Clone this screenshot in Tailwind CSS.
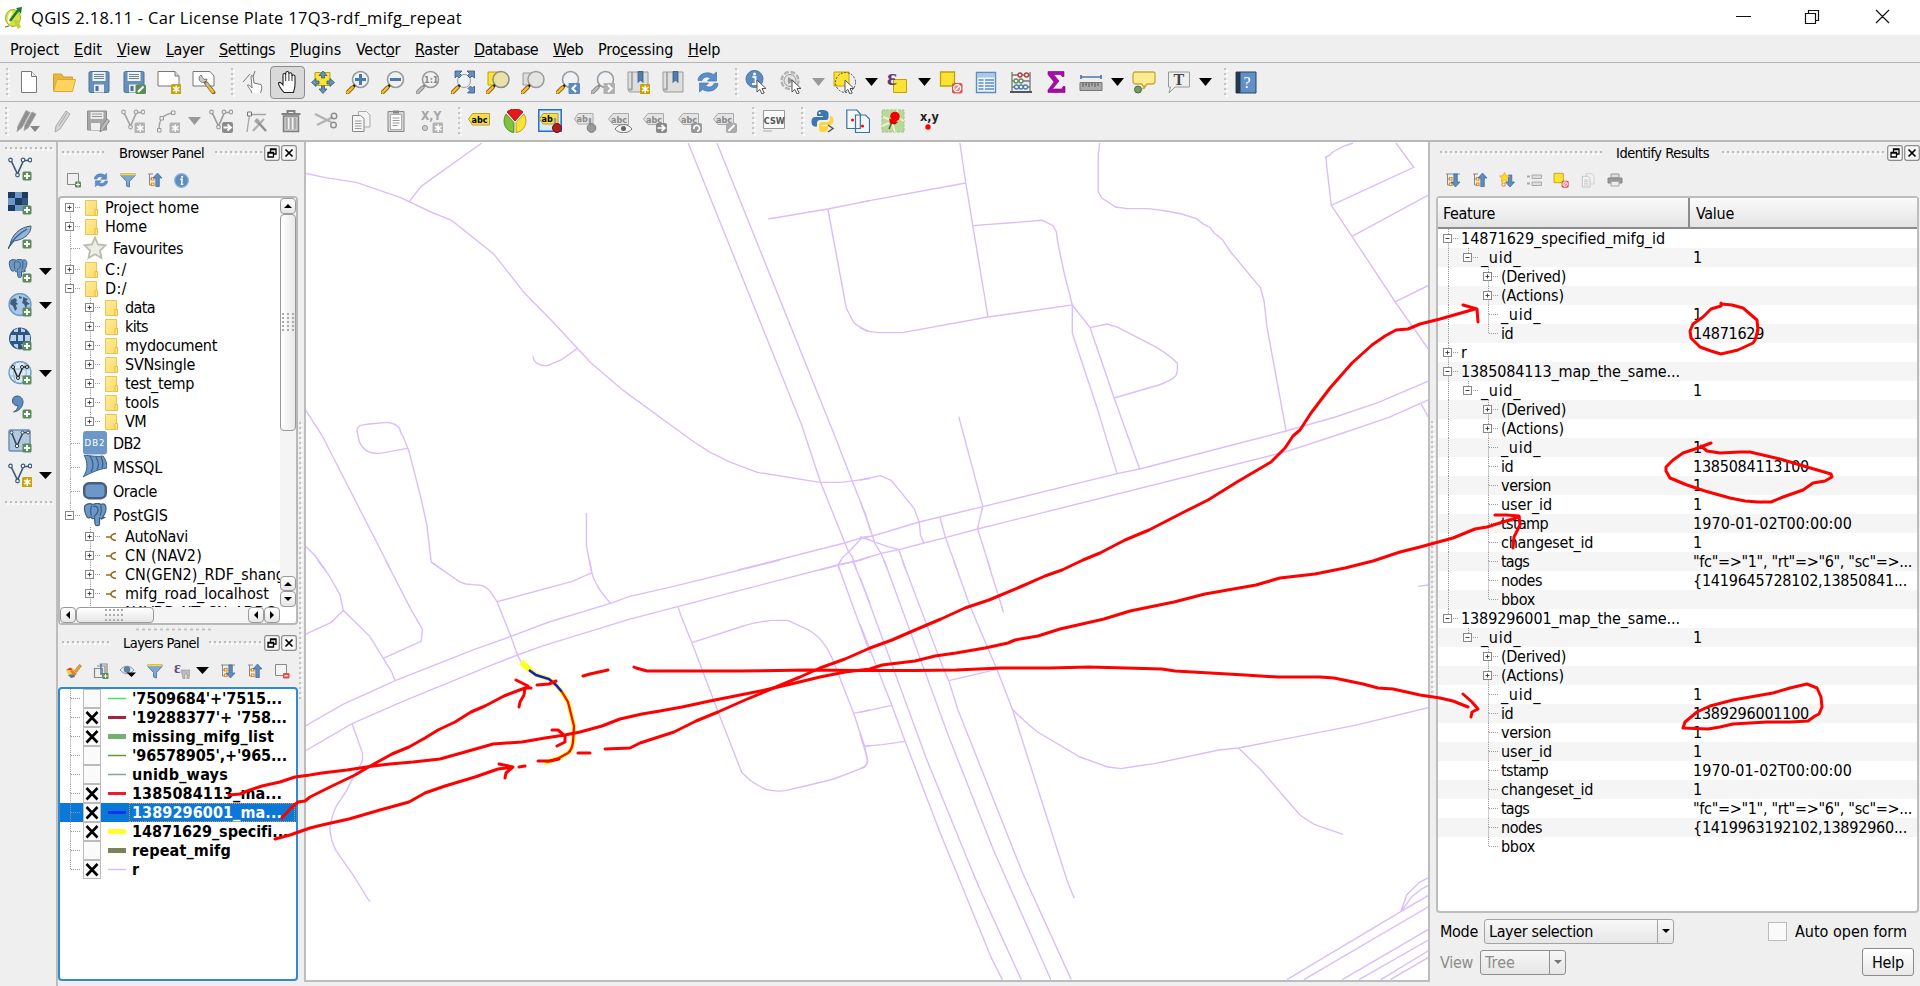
<!DOCTYPE html>
<html lang="en">
<head>
<meta charset="utf-8">
<title>QGIS 2.18.11 - Car License Plate 17Q3-rdf_mifg_repeat</title>
<script src="https://cdn.jsdelivr.net/npm/@tailwindcss/browser@4"></script>
</head>
<body class="w-[1920px] h-[986px] overflow-hidden bg-[#efefef] text-black text-[16px] leading-[19px] font-['DejaVu_Sans_Condensed','DejaVu_Sans','Noto_Sans',sans-serif] [font-stretch:condensed]">

<svg class="absolute h-0 w-0" width="0" height="0" xmlns="http://www.w3.org/2000/svg">
  <defs>
    <linearGradient id="gy" x1="0" y1="0" x2="1" y2="1"><stop offset="0" stop-color="#ffeb98"/><stop offset="1" stop-color="#fddb6a"/></linearGradient>
    <pattern id="gv" width="4" height="5" patternUnits="userSpaceOnUse"><path d="M0 1h2v2h-2z" fill="#c4c4c4"/><path d="M2 3h2v2h-2z" fill="#fff"/></pattern>
    <g id="lens"><circle cx="14.500" cy="9.500" r="8" fill="#eef2f5" stroke="#9a9a9a" stroke-width="1.600"/></g>
    <g id="handle"><path d="M9 15l-3 3" stroke="#222" stroke-width="2.500"/><path d="M6.500 17.500L1.500 22.500" stroke="#6b4a00" stroke-width="4" stroke-linecap="round"/><path d="M6.500 17.500L1.500 22.500" stroke="#f6b82c" stroke-width="2.600" stroke-linecap="round"/></g>
    <g id="handleg"><path d="M9 15l-3 3" stroke="#888" stroke-width="2.500"/><path d="M6.500 17.500L1.500 22.500" stroke="#8c8c8c" stroke-width="4" stroke-linecap="round"/><path d="M6.500 17.500L1.500 22.500" stroke="#bbb" stroke-width="2.400" stroke-linecap="round"/></g>
    <g id="plus"><rect x="14.500" y="14.500" width="9" height="9" rx="1.500" fill="#5a8c5a"/><path d="M19 16v6M16 19h6" stroke="#fff" stroke-width="2"/></g>
    <g id="starb"><rect x="14" y="14" width="10.500" height="10.500" rx="1.500" fill="#c8a206"/><path d="M19.200 15.500v7.600M16 17.200l6.500 4M16 21.200l6.500-4" stroke="#fff" stroke-width="1.500"/></g>
    <g id="starg"><rect x="13.500" y="13.500" width="11" height="11" rx="1.500" fill="#b3b3b3"/><path d="M19.200 15.500v7.600M16 17.200l6.500 4M16 21.200l6.500-4" stroke="#fff" stroke-width="1.500"/></g>
    <g id="vee" fill="none"><path d="M3 3.500L9.500 17 15.500 3.500H22" stroke-width="1.700"/><g fill="#efefef" stroke-width="1.200"><circle cx="2.500" cy="3" r="1.800"/><circle cx="15" cy="3" r="1.800"/><circle cx="22" cy="3" r="1.800"/><circle cx="9.500" cy="18" r="1.800"/></g></g>
    <g id="lab"><path d="M5 4.500H20.500V15.500H5L.500 10z" stroke-linejoin="round"/></g>
    <g id="cursor"><path d="M12 10v12l2.800-2.600 2.200 4.600 2.200-1-2.200-4.500h4z" fill="#fff" stroke="#555" stroke-width="1"/></g>
    <g id="elephant"><path d="M2 2.500C5 0 8 .500 10 1.500c3-1.500 6-1.500 8 .0c3-1.500 5 .500 5 3.500 0 4-2 7.500-3.500 9l2 .5-3 1.500-2-1v6c0 2-4 2.500-4.500 0L11.500 15c-2 1.500-3 0-3.500-1-2 1.500-3.500 1-4.500-1C2 10 1 5 2 2.500z" fill="#6b98c6" stroke="#3c5d7c" stroke-width="1.200"/><path d="M9 2.500c-2 3-1.500 7-.5 10M10.500 4c2-2 5 0 4.500 4-1 4-2.500 4-4 5.500M17.500 2.500c1 3 1 7-.5 10" fill="none" stroke="#3c5d7c" stroke-width="1.200"/></g>
  </defs>

  <symbol id="i-new" viewBox="0 0 24 24"><path d="M4.500 1.500h10l5 5v16h-15z" fill="#fff" stroke="#777"/><path d="M14.500 1.500v5h5" fill="#eee" stroke="#777"/></symbol>
  <symbol id="i-open" viewBox="0 0 24 24"><path d="M1.500 20V4h8l2 3h9v3" fill="#e9b83a" stroke="#d2a02b"/><path d="M1.500 21.500L5 9.500h18.500l-3 12z" fill="#ffd45c" stroke="#dca93a"/></symbol>
  <symbol id="i-save" viewBox="0 0 24 24"><rect x="2" y="1.500" width="20" height="21" rx="1.500" fill="#6590bd" stroke="#4a7197"/><path d="M5.500 2h13v9h-13z" fill="#f2f2ee"/><path d="M7 4.500h10M7 6.500h10M7 8.500h10" stroke="#6d8197"/><path d="M7 14.500h10v8H7z" fill="#eee"/><path d="M8.500 16h3v5h-3z" fill="#4a7197"/></symbol>
  <symbol id="i-saveas" viewBox="0 0 24 24"><use href="#i-save" width="24" height="24"/><rect x="13.500" y="14.500" width="10.500" height="9.500" rx="1.500" fill="#5a8c5a"/><path d="M16 22l5.500-5.500" stroke="#fff" stroke-width="2.200"/></symbol>
  <symbol id="i-comp" viewBox="0 0 24 24"><path d="M1 1.500h17l4 4.500v10H1z" fill="#fff" stroke="#777"/><path d="M18 1.500v4.500h4" fill="#ddd" stroke="#777"/><use href="#starb"/></symbol>
  <symbol id="i-compm" viewBox="0 0 24 24"><path d="M1 1.500h17l4 4.500v10H1z" fill="#fff" stroke="#777"/><path d="M9 5a4 4 0 1 0 6 4l-3 .5-1.500-2z" fill="#ccc" stroke="#777"/><path d="M14 13l7.500 9.500" stroke="#8a6b18" stroke-width="4" stroke-linecap="round"/><path d="M14 13l3 4" stroke="#bbb" stroke-width="2.500"/><path d="M17 17l4.500 5.500" stroke="#f0c040" stroke-width="2.500"/></symbol>
  <symbol id="i-touch" viewBox="0 0 24 24"><path d="M9.500 23c-1-3-4-6-4.500-8 1.500-.5 3 1 4.500 3l-1-12c1-1.500 2 0 2.200 1l.8 6 7 1.500c1.500 2 .5 6-.5 8.500" transform="translate(1.500 0)" fill="#fff" stroke="#777"/><path d="M2 12l7-8M14 1l-2 6" stroke="#777" fill="none"/></symbol>
  <symbol id="i-hand" viewBox="0 0 24 24"><path d="M8 22.500C5 19 2.500 15.500 2.500 13c1.500-1.500 3 0 4.500 2V5c0-2 2.500-2 2.700 0V3c.3-2 3-2 3.200 0v1c.4-2 3-1.500 3.100.5v1.500c.5-1.500 3-1.300 3 .7v8c0 3-1 5-1.500 7.800z" fill="#fff" stroke="#222" stroke-width="1.100"/><path d="M9.700 5v6M12.900 4v7M16 5v6" stroke="#333"/></symbol>
  <symbol id="i-pansel" viewBox="0 0 24 24"><path d="M4 2.500h15v13H4z" fill="#fbe335" stroke="#c2a100"/><path d="M12 1l4 4.500h-2.500V8h-3V5.500H8zM12 23.500l4-4.500h-2.500v-3h-3v3H8zM.5 12.500L5 8.500V11h3v3H5v2.500zM23.500 12.500L19 8.500V11h-3v3h3v2.500z" fill="#6490c0" stroke="#34597f" stroke-width=".8"/></symbol>
  <symbol id="i-zin" viewBox="0 0 24 24"><use href="#lens"/><path d="M14.500 4v11M9 9.500h11" stroke="#4b79ab" stroke-width="3"/><use href="#handle"/></symbol>
  <symbol id="i-zout" viewBox="0 0 24 24"><use href="#lens"/><path d="M9 9.500h11" stroke="#4b79ab" stroke-width="3"/><use href="#handle"/></symbol>
  <symbol id="i-z11" viewBox="0 0 24 24"><use href="#lens"/><text x="8" y="13" font-size="9" font-weight="bold" fill="#888">1:1</text><use href="#handleg"/></symbol>
  <symbol id="i-zfull" viewBox="0 0 24 24"><circle cx="13" cy="11" r="6.500" fill="#eef2f5" stroke="#9a9a9a"/><path d="M4 1h7L8.500 3.500l2 2-2.500 2.500-2-2L4 8zM23.500 1v7L21 6l-2 2L16.500 5.500l2-2L16 1zM23.500 23h-7l2.500-2.500-2-2 2.500-2.500 2 2 2-2z" fill="#6490c0" stroke="#34597f" stroke-width=".8"/><use href="#handle"/></symbol>
  <symbol id="i-zsel" viewBox="0 0 24 24"><path d="M2 2h11v13H2z" fill="#fbe335" stroke="#c2a100"/><circle cx="15" cy="9.500" r="8" fill="#e9e2a8" stroke="#8a8a8a" stroke-width="1.500"/><use href="#handle"/></symbol>
  <symbol id="i-zlay" viewBox="0 0 24 24"><path d="M2 3h11v12H2z" fill="#ddd" stroke="#999"/><circle cx="15" cy="9.500" r="8" fill="#e3e5e0" stroke="#9a9a9a" stroke-width="1.500"/><use href="#handle"/></symbol>
  <symbol id="i-zlast" viewBox="0 0 24 24"><use href="#lens"/><use href="#handle"/><rect x="12.500" y="13" width="11.500" height="11" rx="1" fill="#5d8abb"/><path d="M20 15l-3.500 3.500L20 22" fill="none" stroke="#fff" stroke-width="2"/></symbol>
  <symbol id="i-znext" viewBox="0 0 24 24"><use href="#lens"/><use href="#handleg"/><rect x="12.500" y="13" width="11.500" height="11" rx="1" fill="#b0b0b0"/><path d="M17 15l3.500 3.500L17 22" fill="none" stroke="#fff" stroke-width="2"/></symbol>
  <symbol id="i-book" viewBox="0 0 24 24"><path d="M2 2h4v18H2zM6 2h16v20H4c-2 0-2-3 0-3h2z" fill="#dedede" stroke="#999"/><path d="M12 1.500h5v11l-2.500-2.500-2.500 2.500z" fill="#4e7db0" stroke="#34597f" stroke-width=".8"/></symbol>
  <symbol id="i-booknew" viewBox="0 0 24 24"><use href="#i-book" width="24" height="24"/><use href="#starb"/></symbol>
  <symbol id="i-refresh" viewBox="0 0 24 24"><path d="M2 10.500C2 4 11 .500 17.500 4.500L20.500 2v9h-9l3-3C11 6 7 7 6 10.500zM22 13.500c0 6.500-9 10-15.500 6L3.500 22v-9h9l-3 3c3.500 2 7.500 1 8.500-2.500z" fill="#5d8fc7" stroke="#4274aa" stroke-width=".7"/></symbol>
  <symbol id="i-ident" viewBox="0 0 24 24"><circle cx="9.500" cy="9" r="8.500" fill="#5d8cc0" stroke="#4b79ab"/><circle cx="9.500" cy="4" r="1.500" fill="#fff"/><path d="M7.500 7h3v7h1.500M7 14h5" stroke="#fff" stroke-width="1.800" fill="none"/><use href="#cursor"/></symbol>
  <symbol id="i-info" viewBox="0 0 24 24"><circle cx="12" cy="12" r="11" fill="#5d8cc0" stroke="#8fb3da" stroke-width="2"/><circle cx="13" cy="6" r="1.800" fill="#fff"/><path d="M10 10h3l-1 8h3" stroke="#fff" stroke-width="2.400" fill="none"/></symbol>
  <symbol id="i-action" viewBox="0 0 24 24"><circle cx="10" cy="10.500" r="8.500" fill="none" stroke="#b3b3b3" stroke-width="2.500" stroke-dasharray="5 1.700"/><circle cx="10" cy="10.500" r="6" fill="#e2e2e2" stroke="#999"/><path d="M8 7l6 3.500-6 3.500z" fill="#999"/><use href="#cursor"/></symbol>
  <symbol id="i-select" viewBox="0 0 24 24"><path d="M1 2h15v14H1z" fill="#fbe335" stroke="#c2a100"/><circle cx="12.500" cy="12.500" r="10" fill="none" stroke="#444" stroke-dasharray="2 1.500"/><use href="#cursor"/></symbol>
  <symbol id="i-eps" viewBox="0 0 24 24"><path d="M7.500 9.500h13v13h-13z" fill="#fbe335" stroke="#c2a100"/><text x="1" y="15" font-size="23" fill="#5e3a73" font-family="Liberation Serif" font-weight="bold">ε</text></symbol>
  <symbol id="i-desel" viewBox="0 0 24 24"><path d="M1.500 2h14v14h-14z" fill="#fbe335" stroke="#c2a100" stroke-width="1.300"/><rect x="13" y="13" width="10.500" height="10.500" rx="2" fill="#d9534f"/><circle cx="18.200" cy="18.200" r="3.500" fill="#e88" stroke="#fff" stroke-width="1.300"/><path d="M16 20.500l4.500-4.500" stroke="#fff" stroke-width="1.300"/></symbol>
  <symbol id="i-table" viewBox="0 0 24 24"><path d="M2.500 2.500h19v20h-19z" fill="#eef3f8" stroke="#5d8cc0" stroke-width="1.400"/><path d="M3 3h18v4.500H3z" fill="#a9c7e6"/><path d="M4.500 10h5M11 10h9M4.500 13h5M11 13h9M4.500 16h5M11 16h9M4.500 19h5M11 19h9" stroke="#5d8cc0" stroke-width="1.500"/></symbol>
  <symbol id="i-abacus" viewBox="0 0 24 24"><path d="M3 2v19M21 2v19M3 5h18M3 11h18M3 17h18" stroke="#777" stroke-width="1.300"/><path d="M1 21h22v2H1z" fill="#555"/><g fill="#fff" stroke-width="1.300"><g stroke="#b33"><circle cx="11" cy="5" r="2"/><circle cx="17.500" cy="5" r="2"/></g><g stroke="#5a8c5a"><circle cx="7" cy="11" r="2"/><circle cx="12" cy="11" r="2"/></g><g stroke="#4b79ab"><circle cx="7.500" cy="17" r="2"/><circle cx="12" cy="17" r="2"/><circle cx="16.500" cy="17" r="2"/></g></g></symbol>
  <symbol id="i-sigma" viewBox="0 0 24 24"><path d="M4 1.500h16v5h-2l-1-2H9.500L15 11l-6.500 8H18l1-2.500h2v6H4v-2.500L10 12 4 4.500z" fill="#a80ca8" stroke="#7a007a" stroke-width=".6"/></symbol>
  <symbol id="i-measure" viewBox="0 0 24 24"><path d="M2 7h20M2 5v4M22 5v4" stroke="#4b79ab" stroke-width="1.700"/><path d="M1 12.500h22v8H1z" fill="#aaa" stroke="#777"/><path d="M4 13v4M7 13v3M10 13v4M13 13v3M16 13v4M19 13v3" stroke="#555"/></symbol>
  <symbol id="i-tip" viewBox="0 0 24 24"><path d="M3 2h18c2 0 2 1 2 2v7c0 2-1 3-3 3h-5l-3 4-2-4H4c-2 0-3-1-3-3V5c0-2 1-3 2-3z" fill="#fbec94" stroke="#c9a92c" stroke-width="1.300"/><path d="M6 20l7-2-1-3" fill="none" stroke="#c9a92c"/><circle cx="6" cy="19.500" r="3.500" fill="#6f9a6a" stroke="#486b45"/></symbol>
  <symbol id="i-text" viewBox="0 0 24 24"><path d="M1.500 2h21v15H8L2 23l1.500-6h-2z" fill="#eef0f0" stroke="#999"/><text x="6.500" y="15" font-size="16" font-weight="bold" font-family="Liberation Serif" fill="#444">T</text></symbol>
  <symbol id="i-help" viewBox="0 0 24 24"><path d="M2 2h20v21H2z" fill="#5f90c8" stroke="#2d445e"/><path d="M2 2h4.500v21H2z" fill="#26374a"/><text x="9.500" y="17.500" font-size="16" font-family="Liberation Serif" fill="#fff">?</text></symbol>

  <symbol id="i-pens" viewBox="0 0 24 24"><path d="M1 22.500l1-5.500L10 1.500l4 2-8 15zM8 21.500l1-5.500 7-13 4 2-8 14z" fill="#8f8f8f" stroke="#a5a5a5"/><path d="M14 17h10l-5 6z" fill="#888"/></symbol>
  <symbol id="i-pen" viewBox="0 0 24 24"><path d="M4 23l1-6L15 2l4 3L9 20z" fill="#d5d5d5" stroke="#aaa"/><path d="M8 17l8-13" stroke="#aaa"/></symbol>
  <symbol id="i-saveg" viewBox="0 0 24 24"><path d="M1.500 2h19v19h-19z" fill="#a6a6a6" stroke="#8e8e8e"/><path d="M4.500 3h13v7h-13z" fill="#e9e9e9"/><path d="M6 5h10M6 7.500h10" stroke="#999"/><path d="M5 14h9v7H5z" fill="#eee"/><path d="M14 23l1-5 6-8 2.500 2-6 8.500z" fill="#bbb" stroke="#888"/></symbol>
  <symbol id="i-veeg" viewBox="0 0 24 24"><use href="#vee" stroke="#a3a3a3"/><use href="#starg"/></symbol>
  <symbol id="i-arcg" viewBox="0 0 24 24"><path d="M3 21C3 11 6 5 18 4" fill="none" stroke="#a5a5a5" stroke-width="1.500"/><g fill="#efefef" stroke="#999"><path d="M1.500 19.500h3.500v3.500h-3.500zM15.500 2h3.500v3.500h-3.500zM4 7.500h3.500v3.500H4z"/></g><use href="#starg"/></symbol>
  <symbol id="i-movg" viewBox="0 0 24 24"><use href="#vee" stroke="#9c9c9c"/><rect x="13" y="13" width="11" height="11" rx="2" fill="#8c8c8c"/><path d="M14.500 18.500h7M18.500 15.500l3.500 3-3.500 3" stroke="#fff" stroke-width="1.800" fill="none"/></symbol>
  <symbol id="i-nodeg" viewBox="0 0 24 24"><path d="M3 23L5.500 5.500H22" stroke="#a5a5a5" fill="none" stroke-width="1.300"/><path d="M3.500 3h4v4h-4z" fill="#eee" stroke="#777"/><path d="M9 22L20 10" stroke="#b0b0b0" stroke-width="2.200"/><path d="M13 12l9 10" stroke="#909090" stroke-width="2.500"/><path d="M10 12l3-3 3 3-3 3z" fill="#a5a5a5"/></symbol>
  <symbol id="i-trash" viewBox="0 0 24 24"><path d="M4.500 7h15v15.500h-15z" fill="#c6c6c6" stroke="#828282" stroke-width="1.500"/><path d="M8 9v11M12 9v11M16 9v11" stroke="#8a8a8a" stroke-width="1"/><path d="M9.500 9v11M13.500 9v11" stroke="#f4f4f4" stroke-width="1.500"/><path d="M2.500 5h19M8.500 4V2h7v2" stroke="#828282" stroke-width="2" fill="none"/></symbol>
  <symbol id="i-cut" viewBox="0 0 24 24"><path d="M1 5l16 8M3 16l16-8" stroke="#b3b3b3" stroke-width="2.300"/><circle cx="20" cy="7" r="2.800" fill="none" stroke="#8f8f8f" stroke-width="1.400"/><circle cx="19.500" cy="16" r="2.800" fill="none" stroke="#8f8f8f" stroke-width="1.400"/></symbol>
  <symbol id="i-copy" viewBox="0 0 24 24"><path d="M9.500 2.500h8l3.500 3.500v12H9.500z" fill="#f3f3f3" stroke="#aaa"/><path d="M3.500 6.500h8l3.500 3v13H3.500z" fill="#f6f6f6" stroke="#888"/><path d="M6 12h6.500M6 14.500h6.500M6 17h6.500M6 19.500h6.500" stroke="#999"/></symbol>
  <symbol id="i-paste" viewBox="0 0 24 24"><path d="M4 2.500h16v20H4z" fill="#d5d5d5" stroke="#888"/><path d="M6.500 5.500h11v15h-11z" fill="#fff" stroke="#aaa"/><path d="M9 1.500h6v3H9z" fill="#888"/><path d="M8.500 9h7M8.500 11.500h7M8.500 14h7M8.500 16.500h5" stroke="#999"/></symbol>
  <symbol id="i-xyg" viewBox="0 0 24 24"><text x="2" y="11" font-size="12" font-weight="bold" fill="#a5a5a5">X,Y</text><circle cx="6" cy="19" r="2.600" fill="#ccc" stroke="#999"/><use href="#starg"/></symbol>
  <symbol id="i-abc" viewBox="0 0 24 24"><g fill="#f6df45" stroke="#b9a02a"><path d="M4.500 4.500H21.500V16H4.500L.500 10z"/></g><text x="3.500" y="13.500" font-size="9" font-weight="bold">abc</text></symbol>
  <symbol id="i-pie" viewBox="0 0 24 24"><circle cx="12" cy="12" r="11" fill="#fff"/><path d="M12 12L4 3c4-4 12-4 16 0z" fill="#e31a1c" stroke="#900" stroke-width=".8"/><path d="M11 13.500V23.500C3 23 -2 13 3 5z" fill="#7dc33b" stroke="#487a1a" stroke-width=".8"/><path d="M13 13.500V23.500c8-.5 13-10.500 8-18.500z" fill="#fbe335" stroke="#a88f00" stroke-width=".8"/></symbol>
  <symbol id="i-abpin" viewBox="0 0 24 24"><path d="M.8 .8h22.400v21.500H.8z" fill="#dbeaf7" stroke="#1d6fd0" stroke-width="1.500"/><path d="M5 4.500H20V15H5L1.500 10z" fill="#f6df45" stroke="#b9a02a"/><text x="3.500" y="13" font-size="9" font-weight="bold">ab</text><path d="M17 9v9" stroke="#999" stroke-width="2.500"/><circle cx="19" cy="19" r="4.500" fill="#b01c1c" stroke="#7a0c0c"/></symbol>
  <symbol id="i-ab2" viewBox="0 0 24 24"><path d="M5 4.500H20V15H5L1.500 10z" fill="#e3e3e3" stroke="#aaa"/><text x="3.500" y="13" font-size="9" font-weight="bold" fill="#888">ab</text><path d="M17 9v9" stroke="#999" stroke-width="2.500"/><circle cx="18.500" cy="19" r="4.300" fill="#999" stroke="#777"/></symbol>
  <symbol id="i-ab3" viewBox="0 0 24 24"><use href="#lab" fill="#e3e3e3" stroke="#aaa"/><text x="3" y="13.500" font-size="9" font-weight="bold" fill="#888">abc</text><path d="M7 20c4-6 13-6 17 0-4 5-13 5-17 0z" fill="#f4f4f4" stroke="#777"/><circle cx="15.500" cy="19.500" r="2.500" fill="#666"/></symbol>
  <symbol id="i-ab4" viewBox="0 0 24 24"><use href="#lab" fill="#e3e3e3" stroke="#aaa"/><text x="3" y="13.500" font-size="9" font-weight="bold" fill="#888">abc</text><rect x="13" y="14" width="11" height="10" rx="2" fill="#888"/><path d="M14.500 19h7M18.500 16l3.500 3-3.500 3" stroke="#fff" stroke-width="1.700" fill="none"/></symbol>
  <symbol id="i-ab5" viewBox="0 0 24 24"><use href="#lab" fill="#e3e3e3" stroke="#aaa"/><text x="3" y="13.500" font-size="9" font-weight="bold" fill="#888">abc</text><rect x="13" y="14" width="11" height="10" rx="2" fill="#999"/><path d="M16 20a2.800 2.800 0 1 1 3 2" stroke="#fff" stroke-width="1.700" fill="none"/></symbol>
  <symbol id="i-ab6" viewBox="0 0 24 24"><use href="#lab" fill="#e3e3e3" stroke="#aaa"/><text x="3" y="13.500" font-size="9" font-weight="bold" fill="#888">abc</text><rect x="13" y="14" width="11" height="10" rx="2" fill="#aaa"/><path d="M15.500 22l6-6" stroke="#fff" stroke-width="2"/></symbol>
  <symbol id="i-csw" viewBox="0 0 24 24"><path d="M1.500 1.500h21v18h-21z" fill="#fafafa" stroke="#999"/><path d="M1 22h9" stroke="#aaa"/><text x="1.800" y="14.500" font-size="9" font-weight="bold" fill="#555">CSW</text></symbol>
  <symbol id="i-py" viewBox="0 0 24 24"><path d="M11 1c-4 0-5 1.500-5 4v2h6v1H4c-3 0-3.500 3-3.500 5s1 4.500 3.500 4.500h2V14c0-2 1.500-3 3-3h6c2 0 2.500-1.500 2.500-3V5c0-3-2.500-4-6.500-4z" fill="#3c77ae"/><circle cx="8.700" cy="4" r="1" fill="#fff"/><path d="M12 23c4 0 5-1.500 5-4v-2h-6v-1h8c3 0 3.500-3 3.500-5s-1-4-3.500-4v3c0 2-1.500 3-3 3h-5c-2 0-3 1.500-3 3v3c0 3 0 4 4 4z" fill="#ffd443"/><path d="M17 16l5 3.500-5 3.500" fill="none" stroke="#555" stroke-width="1.500"/></symbol>
  <symbol id="i-copy2" viewBox="0 0 24 24"><path d="M.8 1h10l3.500 4v14.500H.8zM9.500 6h10l4 4v13.500h-14z" fill="#f2f7fb" stroke="#3b7297" stroke-width="1.200"/><circle cx="6.500" cy="11" r="1.500" fill="red"/><circle cx="16.500" cy="17" r="1.500" fill="red"/></symbol>
  <symbol id="i-pinmap" viewBox="0 0 24 24"><path d="M1 1h22v22H1z" fill="#b9d99b" stroke="#9dc284" stroke-dasharray="3 1"/><path d="M2 8l8 3 4 12M16 1l2 8 5 3M1 17l7-3" stroke="#e9f2c9" fill="none" stroke-width="2"/><path d="M11 13l-3 7" stroke="#555" stroke-width="1.500"/><circle cx="14" cy="7.500" r="4.800" fill="#f40000"/><path d="M8 9.500l9 3.500-3 2.500-5-1z" fill="#e00000"/></symbol>
  <symbol id="i-xy" viewBox="0 0 24 24"><text x="4" y="11.500" font-size="12.500" font-weight="bold" fill="#222">x,y</text><circle cx="12" cy="18" r="2.700" fill="red"/></symbol>

  <symbol id="v-vec" viewBox="0 0 24 24"><use href="#vee" stroke="#3c5d7c"/><use href="#plus"/></symbol>
  <symbol id="v-ras" viewBox="0 0 24 24"><path d="M0 1h20v19H0z" fill="#6b98c6"/><path d="M0 1h7v6H0zM14 1h6v6h-6zM7 7h7v7H7zM0 14h7v6H0z" fill="#1c3b60"/><path d="M14 7h6v7h-6z" fill="#31567f"/><use href="#plus"/></symbol>
  <symbol id="v-feather" viewBox="0 0 24 24"><path d="M2 21C3 10 12 2 23 1c0 7-5 13-17 15z" fill="#8fb3da" stroke="#3c5d7c"/><path d="M0 24C4 15 10 9 19 4" fill="none" stroke="#3c5d7c" stroke-width="1.400"/><use href="#plus"/></symbol>
  <symbol id="v-pg" viewBox="0 0 24 24"><g transform="scale(.82)"><use href="#elephant"/></g><use href="#plus"/></symbol>
  <symbol id="v-globe1" viewBox="0 0 24 24"><circle cx="12" cy="11.500" r="11" fill="#a9c7e6" stroke="#6b98c6" stroke-width="1.300"/><path d="M3 7l4-2 2 2-1 2 2 2-2 1 1 4-2 2-2-5-3-2zM11 3l3 1-1 2-2-1zM15 4l5 2-2 2 4 3-3 1-1 4-2-5-2-1 1-3z" fill="#3c5d7c"/><use href="#plus"/></symbol>
  <symbol id="v-globe2" viewBox="0 0 24 24"><circle cx="12" cy="11.500" r="11" fill="#2d5580"/><path d="M3 8h5v6H2zM10 8h5v6h-5zM17 8h5v6h-5zM6 3l4-2v4H6zM13 1l4 2v2h-4zM6 17h4v5l-4-3zM13 17h4l-2 4z" fill="#b9d3ee"/><use href="#plus"/></symbol>
  <symbol id="v-globe3" viewBox="0 0 24 24"><circle cx="12" cy="11.500" r="11" fill="#dce9f6" stroke="#6b98c6" stroke-width="1.300"/><path d="M1 8h22M1 15h22M8 1c-3 7-3 14 0 21M16 1c3 7 3 14 0 21" fill="none" stroke="#8fb3da"/><path d="M5 6l5 11L15 6h4" stroke="#222" fill="none" stroke-width="1.500"/><g fill="#fff" stroke="#222"><circle cx="5" cy="6" r="1.500"/><circle cx="14" cy="6" r="1.500"/><circle cx="19" cy="6" r="1.500"/><circle cx="10" cy="17" r="1.500"/></g><use href="#plus"/></symbol>
  <symbol id="v-comma" viewBox="0 0 24 24"><path d="M9 1a5 5 0 0 0-4.500 5c0 3 2.500 5 5.500 4.500 0 3-2 5-4.500 6.500 5-.5 9.500-5 9.500-10C15 3.500 12.500 1 9 1z" fill="#5d8cc0" stroke="#3c5d7c"/><use href="#plus"/></symbol>
  <symbol id="v-virt" viewBox="0 0 24 24"><rect x="1" y="1" width="21" height="21" rx="1.500" fill="#b4c8de" stroke="#6e8fb5" stroke-width="1.500"/><path d="M3.500 3.500L9 17 15 3.500h5" stroke="#2c4660" fill="none" stroke-width="1.500"/><g fill="#fff" stroke="#2c4660"><circle cx="3.500" cy="3.500" r="1.500"/><circle cx="14.500" cy="3.500" r="1.500"/><circle cx="20" cy="3.500" r="1.500"/><circle cx="9" cy="17" r="1.700"/></g><use href="#plus"/></symbol>
  <symbol id="v-newvec" viewBox="0 0 24 24"><use href="#vee" stroke="#3c5d7c"/><use href="#starb"/></symbol>

  <symbol id="p-add" viewBox="0 0 16 16"><path d="M1.500 1.500h11v11h-11z" fill="none" stroke="#888"/><rect x="9" y="9.500" width="6" height="6" rx="1" fill="#5a8c5a"/><path d="M12 10.500v4M10 12.500h4" stroke="#fff"/></symbol>
  <symbol id="p-filter" viewBox="0 0 16 16"><path d="M1 1.500h14v2l-5.500 6V15l-3-1V9.500L1 3.500z" fill="#7fa6d1" stroke="#5580ad"/><path d="M1 1.200h14v2H1z" fill="#f3d936"/></symbol>
  <symbol id="p-up" viewBox="0 0 16 16"><path d="M1 2h5M2.500 2v11h3M2.500 7h3" stroke="#888" fill="none"/><path d="M4.500 5.500h2.500v2.500H4.500zM4.500 11h2.500v2.500H4.500z" fill="#fff" stroke="#e88a1a" stroke-width="1.200"/><path d="M10.500 1l4.500 5h-2.700v8.500H8.800V6H6z" fill="#5d8cc0" stroke="#3a6593" stroke-width=".7"/></symbol>
  <symbol id="p-down" viewBox="0 0 16 16"><path d="M1 2h14M2.500 2v11h3M2.500 7h3" stroke="#888" fill="none"/><path d="M4.500 5.500h2.500v2.500H4.500zM4.500 11h2.500v2.500H4.500z" fill="#fff" stroke="#e88a1a" stroke-width="1.200"/><path d="M10.500 15L15 10h-2.700V2H8.800v8H6z" fill="#5d8cc0" stroke="#3a6593" stroke-width=".7"/></symbol>
  <symbol id="p-stardown" viewBox="0 0 16 16"><path d="M11 15l4.500-5h-2.700V3H9.500v7H6.500z" fill="#5d8cc0" stroke="#3a6593" stroke-width=".7"/><path d="M3 11h3v3H3z" fill="#fff" stroke="#e88a1a"/><path d="M5.500 .5l1.500 3.300 3.500.3-2.600 2.400.8 3.500-3.200-1.900L2.300 10l.8-3.500L.5 4.100 4 3.800z" fill="#ffdd22" stroke="#e5a010" stroke-width=".7"/></symbol>
  <symbol id="p-form" viewBox="0 0 16 16"><path d="M1 4.500h3M1 11.500h3" stroke="#aaa" stroke-width="2"/><path d="M6 3h9.500v3.500H6zM6 10h9.500v3.500H6z" fill="#ddd" stroke="#aaa"/></symbol>
  <symbol id="p-print" viewBox="0 0 16 16"><path d="M4 2h8v4H4z" fill="#ddd" stroke="#999"/><path d="M1 6h14v5H1z" fill="#999" stroke="#888"/><path d="M4 9.500h8V14H4z" fill="#eee" stroke="#aaa"/></symbol>
  <symbol id="p-brush" viewBox="0 0 16 16"><path d="M0 7l7-2 3 5-7 3z" fill="#f2d030"/><path d="M0 6.500l5-2 1.500 3z" fill="#d33"/><path d="M2 12l6-1 1 3-4 1z" fill="#4b79ab"/><path d="M8.500 7.500L13.500 1.500l2 1.500-5 6.500z" fill="#e8a33c" stroke="#b5762a" stroke-width=".7"/><path d="M6.500 7l4.500 4-2.500 2-4.500-4.500z" fill="#e07a4a"/></symbol>
  <symbol id="p-group" viewBox="0 0 16 16"><path d="M1.500 5.500h8v9h-8zM4 3h8v9M6.500 1h7.500v9" fill="none" stroke="#888" stroke-width="1.200"/><path d="M8 1v11" stroke="#4b79ab" stroke-width="1.500"/><rect x="9.500" y="10" width="6" height="6" rx="1" fill="#5a8c5a"/><path d="M12.500 11v4M10.500 13h4" stroke="#fff"/></symbol>
  <symbol id="p-eye" viewBox="0 0 16 16"><path d="M0 7c4-5 10-5 14 0-4 5-10 5-14 0z" fill="#dfe6ec" stroke="#8d9aa6"/><circle cx="7" cy="6.500" r="3.200" fill="#5f7fa3"/><path d="M6.500 9.500H16L11.500 14z"/></symbol>
  <symbol id="p-epsf" viewBox="0 0 16 16"><text x="0" y="10" font-size="16" font-weight="bold" fill="#6e4a85" font-family="Liberation Serif">ε</text><path d="M7 7h9v2l-1 7h-2v-5h-2v5H9z" fill="#bbb" stroke="#999" stroke-width=".6"/></symbol>
  <symbol id="p-rem" viewBox="0 0 16 16"><path d="M1.500 1.500h11v11h-11z" fill="#f4f4f4" stroke="#888"/><rect x="9" y="10" width="6.500" height="5.500" rx="1" fill="#e2504d"/><path d="M10.500 12.700h3.500" stroke="#fff" stroke-width="1.300"/></symbol>

  <symbol id="t-folder" viewBox="0 0 13 16"><path d="M.5 .5h11v15H.5z" fill="url(#gy)" stroke="#ecc550"/><path d="M10 9.500h2.500v6H10z" fill="#ffe58e" stroke="#e7bb3c"/></symbol>
  <symbol id="t-star" viewBox="0 0 24 24"><path d="M12 1.500l3 7 7.500.8-5.500 5.200 1.500 7.500-6.500-3.700L5.500 22 7 14.500 1.500 9.300 9 8.500z" fill="#eceee6" stroke="#b9bda9" stroke-width="1.800"/></symbol>
  <symbol id="t-db2" viewBox="0 0 24 24"><rect width="24" height="23.500" rx="3" fill="#6b98c6"/><text x="1.500" y="15" font-size="9.500" fill="#fff" textLength="20">DB2</text></symbol>
  <symbol id="t-ms" viewBox="0 0 24 24"><path d="M1 0c7 1 14 2 19 1 3 4 4 8 4 12C16 14 7 18 0 22 5 16 5 7 1 0z" fill="#6b98c6" stroke="#3c5d7c"/><path d="M7 1c4 6 4 11 1 16M13 2c3 5 3 9 1 13M18 2c2 4 2 8 1 11" stroke="#3c5d7c" fill="none" stroke-width="1.200"/></symbol>
  <symbol id="t-ora" viewBox="0 0 24 24"><rect x="1.200" y="4.200" width="21.600" height="15" rx="5" fill="#6b98c6" stroke="#465f7c" stroke-width="2.400"/></symbol>
  <symbol id="t-pg" viewBox="0 0 24 24"><use href="#elephant"/></symbol>
  <symbol id="t-conn" viewBox="0 0 13 16"><path d="M1 8h5.500M11 4.500C7.500 5 6 6.500 6 8s1.500 3 5 3.500" fill="none" stroke="#9a6a1a" stroke-width="1.600"/></symbol>
  <symbol id="dock" viewBox="0 0 16 16"><rect x=".7" y=".7" width="14.600" height="14.600" rx="2" fill="#f7f7f7" stroke="#8b8b8b" stroke-width="1.200"/><path d="M6.500 7V4h5.500v5H9.500M6 4.500h6" fill="none" stroke="#000" stroke-width="1.300"/><path d="M4 7.500h5.500V12H4zM4 8h5.500" fill="none" stroke="#000" stroke-width="1.300"/></symbol>
  <symbol id="close" viewBox="0 0 16 16"><rect x=".7" y=".7" width="14.600" height="14.600" rx="2" fill="#f7f7f7" stroke="#8b8b8b" stroke-width="1.200"/><path d="M4.500 4.500l7 7M11.500 4.500l-7 7" stroke="#000" stroke-width="1.700"/></symbol>
</svg>

<div class="relative flex h-[986px] w-[1920px] flex-col">

  <header class="flex h-[35px] shrink-0 items-center bg-white font-['Open_Sans','Noto_Sans',sans-serif] text-[16.5px] [font-stretch:normal]">
    <svg class="ml-[4px] mr-[8px] h-[24px] w-[19px]" viewBox="0 0 19 24"><ellipse cx="9" cy="12" rx="7.500" ry="8.500" fill="#d7e33a" stroke="#9fb12c"/><path d="M8 6c-3 3-4 8-2 11" stroke="#fff" stroke-width="2.500" fill="none"/><path d="M9 14l5 9 3-2-3-7z" fill="#c2cf3c"/><path d="M6 15L15 3" stroke="#1c7a34" stroke-width="2.500"/><path d="M12 2l6-1-1 7z" fill="#1c7a34"/><path d="M1 21l4-1" stroke="#555"/></svg>
    <span data-w="431">QGIS 2.18.11 - Car License Plate 17Q3-rdf_mifg_repeat</span>
    <span class="grow"></span>
    <svg class="mr-[1px] h-[35px] w-[184px]" viewBox="0 0 184 35" fill="none" stroke="#111" stroke-width="1.200"><path d="M1 16.500h15M70.500 13.500h10v10h-10zM73.500 13.500v-3h10v10h-3M141 10l13 13M154 10l-13 13"/></svg>
  </header>

  <nav class="flex h-[27px] shrink-0 items-center gap-[15px] pl-[10px] pt-[1px]" id="menu"></nav>

  <div class="flex h-[39px] shrink-0 items-center border-t border-[#b5b5b5] pl-[6px]" id="bar1"></div>
  <div class="flex h-[39px] shrink-0 items-center border-t border-[#b5b5b5] pl-[5px]" id="bar2"></div>

  <main class="flex h-[846px] shrink-0 border-t-2 border-[#b9b9b9]">
    <aside class="flex w-[56px] shrink-0 flex-col pl-[5px] pt-[4px]">
      <svg class="h-[6px] w-[48px]"><path d="M0 2H48" stroke="#bcbcbc" stroke-width="2" stroke-dasharray="2 3"/><path d="M2 4H48" stroke="#fff" stroke-width="2" stroke-dasharray="2 3"/></svg>
      <div id="vbar" class="flex flex-col"></div>
      <svg class="mt-[8px] h-[6px] w-[48px]"><path d="M0 2H48" stroke="#bcbcbc" stroke-width="2" stroke-dasharray="2 3"/><path d="M2 4H48" stroke="#fff" stroke-width="2" stroke-dasharray="2 3"/></svg>
    </aside>

    <section class="flex w-[242px] shrink-0 flex-col border-l-2 border-[#bdbdbd]">
      <div class="flex h-[22px] items-center pl-[4px] text-[14.500px]">
        <svg class="h-[6px] w-[42px]"><path d="M0 2H42" stroke="#bcbcbc" stroke-width="2" stroke-dasharray="2 3"/><path d="M2 4H42" stroke="#fff" stroke-width="2" stroke-dasharray="2 3"/></svg>
        <span class="ml-[15px]" data-w="85">Browser Panel</span>
        <svg class="ml-[11px] h-[6px] w-[47px]"><path d="M0 2H47" stroke="#bcbcbc" stroke-width="2" stroke-dasharray="2 3"/><path d="M2 4H47" stroke="#fff" stroke-width="2" stroke-dasharray="2 3"/></svg>
        <svg class="ml-[2px] h-[16px] w-[16px]"><use href="#dock"/></svg><svg class="ml-[1px] h-[16px] w-[16px]"><use href="#close"/></svg>
      </div>
      <div class="flex h-[32px] items-center gap-[11px] pl-[8px]">
        <svg class="h-4 w-4"><use href="#p-add"/></svg><svg class="h-4 w-4"><use href="#i-refresh"/></svg><svg class="h-4 w-4"><use href="#p-filter"/></svg><svg class="h-4 w-4"><use href="#p-up"/></svg><svg class="h-[15px] w-[15px]"><use href="#i-info"/></svg>
      </div>
      <div class="flex h-[429px] w-[240px] shrink-0 flex-col rounded-sm border-2 border-[#b9b9b9] bg-white">
        <div class="flex h-[409px] shrink-0 overflow-hidden">
          <div id="tree" class="w-[220px] shrink-0 overflow-hidden whitespace-nowrap"></div>
          <div class="flex w-[16px] flex-col bg-[#f4f4f4]">
            <div class="flex h-[16px] shrink-0 items-center justify-center rounded-sm border border-[#999] bg-linear-to-b from-white to-[#e6e6e6]"><svg class="h-1 w-2" viewBox="0 0 8 4"><path d="M0 4L4 0l4 4z"/></svg></div>
            <div class="flex h-[217px] shrink-0 items-center justify-center rounded-sm border border-[#999] bg-linear-to-r from-white to-[#e9e9e9]"><svg class="h-[20px] w-[12px]"><path d="M1 0V20M6 0V20M11 0V20" stroke="#aaa" stroke-width="2" stroke-dasharray="2 2"/></svg></div>
            <div class="grow"></div>
            <div class="flex h-[15px] items-center justify-center rounded-sm border border-[#999] bg-linear-to-b from-white to-[#e6e6e6]"><svg class="h-1 w-2" viewBox="0 0 8 4"><path d="M0 4L4 0l4 4z"/></svg></div>
            <div class="flex h-[16px] items-center justify-center rounded-sm border border-[#999] bg-linear-to-b from-white to-[#e6e6e6]"><svg class="h-1 w-2" viewBox="0 0 8 4"><path d="M0 0h8L4 4z"/></svg></div>
          </div>
        </div>
        <div class="flex h-[16px] w-[220px] bg-[#f4f4f4]">
          <div class="flex w-[16px] items-center justify-center rounded-sm border border-[#999] bg-linear-to-b from-white to-[#e6e6e6]"><svg class="h-2 w-1" viewBox="0 0 4 8"><path d="M4 0v8L0 4z"/></svg></div>
          <div class="flex w-[78px] items-center justify-center rounded-sm border border-[#999] bg-linear-to-b from-white to-[#e6e6e6]"><svg class="h-[12px] w-[20px]"><path d="M0 1H20M0 6H20M0 11H20" stroke="#aaa" stroke-width="2" stroke-dasharray="2 2"/></svg></div>
          <div class="grow"></div>
          <div class="flex w-[16px] items-center justify-center rounded-sm border border-[#999] bg-linear-to-b from-white to-[#e6e6e6]"><svg class="h-2 w-1" viewBox="0 0 4 8"><path d="M4 0v8L0 4z"/></svg></div>
          <div class="flex w-[16px] items-center justify-center rounded-sm border border-[#999] bg-linear-to-b from-white to-[#e6e6e6]"><svg class="h-2 w-1" viewBox="0 0 4 8"><path d="M0 0v8L4 4z"/></svg></div>
        </div>
      </div>
      <div class="flex h-[8px] items-center pl-[78px]"><svg class="h-[3px] w-[78px]"><path d="M0 1.500H78" stroke="#c4c4c4" stroke-width="2" stroke-dasharray="3 3"/></svg></div>
      <div class="flex h-[20px] items-center pl-[4px] text-[14.500px]">
        <svg class="h-[6px] w-[48px]"><path d="M0 2H48" stroke="#bcbcbc" stroke-width="2" stroke-dasharray="2 3"/><path d="M2 4H48" stroke="#fff" stroke-width="2" stroke-dasharray="2 3"/></svg>
        <span class="ml-[13px]" data-w="76">Layers Panel</span>
        <svg class="ml-[10px] h-[6px] w-[53px]"><path d="M0 2H53" stroke="#bcbcbc" stroke-width="2" stroke-dasharray="2 3"/><path d="M2 4H53" stroke="#fff" stroke-width="2" stroke-dasharray="2 3"/></svg>
        <svg class="ml-[2px] h-[16px] w-[16px]"><use href="#dock"/></svg><svg class="ml-[1px] h-[16px] w-[16px]"><use href="#close"/></svg>
      </div>
      <div class="flex h-[34px] items-center gap-[11px] pl-[8px] pt-[1px]">
        <svg class="h-4 w-4"><use href="#p-brush"/></svg><svg class="h-4 w-4"><use href="#p-group"/></svg><svg class="h-4 w-4"><use href="#p-eye"/></svg><svg class="h-4 w-4"><use href="#p-filter"/></svg><svg class="h-4 w-4"><use href="#p-epsf"/></svg><svg class="-ml-[5px] h-[7px] w-[13px]" viewBox="0 0 13 7"><path d="M0 0h13L6.500 7z"/></svg><svg class="h-4 w-4"><use href="#p-down"/></svg><svg class="h-4 w-4"><use href="#p-up"/></svg><svg class="h-4 w-4"><use href="#p-rem"/></svg>
      </div>
      <div id="layers" class="h-[294px] w-[240px] shrink-0 overflow-hidden whitespace-nowrap rounded-sm border-2 border-[#3189d0] bg-white font-bold"></div>
    </section>

    <div class="flex w-[6px] shrink-0 flex-col items-center justify-start pt-[279px]"><svg class="h-[278px] w-[4px]"><rect width="4" height="278" fill="url(#gv)"/></svg></div>

    <section class="h-[840px] w-[1126px] shrink-0 border-2 border-t-0 border-[#bdbdbd] bg-white">
      <svg class="h-[838px] w-[1122px]" viewBox="306 142 1122 838" fill="none" stroke="#dabdfb">
        <g class="[&>path]:[vector-effect:non-scaling-stroke] [&>path]:[stroke-width:1.4px]" transform="matrix(.36352 0 0 .33333 300 140)">
          <path d="M14 100L70 113 157 128 277 173 360 216 418 242 532 341 618 460 690 539 763 625 800 668 890 752 1080 903 1125 935 1180 965 1258 997 1430 1027H1488L1568 1016"/>
          <path d="M500 9L333 139 299 187M763 625L718 660 682 676C660 680 642 668 641 649"/>
          <path d="M1068 9L1380 855 1432 1027 1509 1236 1519 1250 1531 1290M1147 9L1470 885 1518 1020 1557 1127 1568 1170"/>
          <path d="M1288 237L1452 207 1568 182M1452 207L1503 505 1523 547Q1540 565 1568 575"/>
          <path d="M14 808L60 885 250 1290M14 1218L40 1245 70 1290M240 847L190 852C165 855 157 858 157 873L163 905C175 935 195 942 220 940L295 925M240 847C262 850 276 860 277 878L286 895 300 935 333 1075 349 1155 358 1240 361 1266 392 1290M788 1119V1218L801 1290"/>
          <path d="M1205 1290L1498 1209 1546 1193 1568 1200M1430 1290L1480 1275 1523 1265 1568 1250M1546 1193L1509 1236 1493 1252 1480 1275 1484 1290M1546 1193L1568 1189"/>
        </g>
        <g class="[&>path]:[vector-effect:non-scaling-stroke] [&>path]:[stroke-width:1.4px]" transform="matrix(.36352 0 0 .33333 300 560)">
          <path d="M48 0L80 46 110 104 119 151 192 229 229 295 252 336 262 362M14 223L86 187 119 151M235 0L307 152 337 208 333 244 229 295"/>
          <path d="M361 6L440 66 456 72 500 76Q518 84 525 97L542 125 580 229 598 285 608 305M542 125L749 64 803 38M796 0L803 38Q810 75 854 130"/>
          <path d="M14 498L118 433 262 362 480 268 580 229 685 186 854 130 907 109 1025 80 1320 0M14 573L143 491 288 422 525 316 598 285 670 257 905 178 1039 140 1210 91 1480 15 1545 0"/>
          <path d="M143 491L172 579V602L163 620 145 655 128 692 100 738Q90 760 86 782L82 804Q84 840 99 872L145 943 192 1026"/>
          <path d="M1040 140L1048 167 1078 248 1150 455 1215 637Q1245 672 1282 688 1310 696 1335 692L1390 678 1468 657 1550 623Q1562 615 1561 600L1553 558 1523 460 1466 300 1450 265Q1430 230 1400 210L1342 181H1297Q1250 187 1220 198L1078 248M1523 460L1568 450M1553 558L1568 557M1489 0L1480 15 1568 280M1520 0L1568 130"/>
        </g>
        <g class="[&>path]:[vector-effect:non-scaling-stroke] [&>path]:[stroke-width:1.4px]" transform="matrix(.36990 0 0 .33333 860 140)">
          <path d="M0 187L286 129M270 9L286 129 305 257 346 531M305 257L493 241 522 257 531 276 534 303 552 400 574 495 346 531 115 578H52L20 574 0 563M574 495V580L640 800 695 1001M574 495L622 563 687 774 756 987M622 563L668 552 697 562 802 622Q840 648 858 670V691L854 707Q840 722 808 735L687 774"/>
          <path d="M648 9L644 45V155L654 174 691 201 722 206H780L828 213 870 222 909 236 930 253 947 263 957 279 980 299 1000 333 1082 443 1092 480 1100 560 1152 873"/>
          <path d="M1333 9L1305 20 1278 36 1269 46 1259 51 1274 196 1330 289 1447 486 1537 628M1449 9L1497 82 1274 196M1330 289L1480 199 1537 165M1447 486L1537 436M1517 792L1537 832"/>
          <path d="M0 1194L34 1188 160 1146 216 1131 332 1100 695 1001 756 987 1152 873 1285 831 1400 788 1537 723M0 1260L57 1240 105 1229 173 1209 231 1193 318 1167 1152 935 1290 885 1430 832 1537 779M0 1020L56 1007 85 1022 146 1105 160 1146 164 1188 173 1209M267 830L332 1100 324 1135 318 1167 353 1290M216 1131L231 1193 263 1290M0 1083L16 1130 34 1188 40 1210 57 1240 75 1290M0 1190L75 1220 105 1229 124 1290"/>
        </g>
        <g class="[&>path]:[vector-effect:non-scaling-stroke] [&>path]:[stroke-width:1.4px]" transform="matrix(.36990 0 0 .33333 860 560)">
          <path d="M0 192L86 436 122 544 214 811 356 1196 385 1259M0 52L178 592 300 924 325 990 436 1259M65 0L240 530 360 868 516 1259M114 0L226 328 240 362 264 447 440 940 571 1259M253 0L297 137 370 328 412 448 560 962 579 1015M344 0L388 157"/>
          <path d="M240 362L370 328M412 448Q440 480 480 516L595 591 670 621 706 626 750 618 796 611 970 570 1023 564 1335 497 1537 443M1023 564L1082 627 1190 766 1228 793 1306 823M0 457L86 436M10 559L60 554 122 544M0 522L20 596Q22 620 0 626M1509 79L1537 75"/>
          <path d="M1154 1259L1462 1055 1537 1006M1200 1259L1537 1040M1304 1259L1537 1108M1349 1259L1537 1140M1408 1259L1537 1172M1434 1259L1537 1192M1462 1055L1478 1005 1512 967 1537 953M1462 1055L1492 1010 1518 987 1537 976"/>
        </g>
        <path d="M521 662L530 670" stroke="#ffff1e" stroke-width="6"/>
        <path d="M530 670L536 675 549 679 556 685 562 692 568 702 574 726 573 742Q572 750 568 753L559 758 544 763" stroke="#ffff1e" stroke-width="4.500"/>
        <path d="M529 670L536 675 549 679 556 685 562 692" stroke="#0f1be0" stroke-width="2.500"/>
        <path d="M562 692L568 702 574 726 573 742Q572 750 568 753L559 758 546 762" stroke="#f01020" stroke-width="2.300"/>
      </svg>
    </section>

    <div class="flex w-[6px] shrink-0 flex-col items-center pt-[278px]"><svg class="h-[280px] w-[4px]"><rect width="4" height="280" fill="url(#gv)"/></svg></div>

    <section class="flex w-[484px] shrink-0 flex-col">
      <div class="flex h-[22px] items-center pl-[4px] text-[14.500px]">
        <svg class="h-[6px] w-[162px]"><path d="M0 2H162" stroke="#bcbcbc" stroke-width="2" stroke-dasharray="2 3"/><path d="M2 4H162" stroke="#fff" stroke-width="2" stroke-dasharray="2 3"/></svg>
        <span class="ml-[14px]" data-w="93">Identify Results</span>
        <svg class="ml-[13px] h-[6px] w-[162px]"><path d="M0 2H162" stroke="#bcbcbc" stroke-width="2" stroke-dasharray="2 3"/><path d="M2 4H162" stroke="#fff" stroke-width="2" stroke-dasharray="2 3"/></svg>
        <svg class="ml-[3px] h-[16px] w-[16px]"><use href="#dock"/></svg><svg class="ml-[1px] h-[16px] w-[16px]"><use href="#close"/></svg>
      </div>
      <div class="flex h-[32px] items-center gap-[11px] pl-[9px]">
        <svg class="h-4 w-4"><use href="#p-down"/></svg><svg class="h-4 w-4"><use href="#p-up"/></svg><svg class="h-4 w-4"><use href="#p-stardown"/></svg><svg class="h-4 w-4"><use href="#p-form"/></svg><svg class="h-4 w-4"><use href="#i-desel"/></svg><svg class="h-4 w-4 opacity-60"><use href="#i-copy"/></svg><svg class="h-4 w-4"><use href="#p-print"/></svg>
      </div>
      <div class="flex h-[717px] w-[483px] shrink-0 flex-col rounded-sm border-2 border-[#bdbdbd] bg-white">
        <div class="flex h-[31px] shrink-0 items-center border-b-2 border-[#8b8b8b] bg-linear-to-b from-[#fbfbfb] to-[#e3e3e3]">
          <div class="flex h-full w-[252px] items-center border-r-2 border-[#8b8b8b] pl-[5px] pt-[2px]"><span data-w="52">Feature</span></div>
          <div class="pl-[6px] pt-[2px]"><span data-w="38">Value</span></div>
        </div>
        <div id="ident" class="whitespace-nowrap"></div>
      </div>
      <div class="mt-[5px] flex h-[26px] items-center pl-[4px]">
        <span data-w="38">Mode</span>
        <div class="ml-[6px] flex h-[25px] w-[190px] items-center rounded-[3px] border border-[#a3a3a3] bg-linear-to-b from-[#f8f8f8] to-[#e6e6e6] pl-[4px]"><span data-w="104">Layer selection</span><span class="grow"></span><span class="flex h-full w-[16px] items-center justify-center border-l border-[#a3a3a3]"><svg class="h-1 w-2" viewBox="0 0 8 4"><path d="M0 0h8L4 4z"/></svg></span></div>
        <div class="ml-[94px] h-[19px] w-[19px] border border-[#bbb] bg-[#fafafa]"></div>
        <span class="ml-[8px]" data-w="112">Auto open form</span>
      </div>
      <div class="mt-[4px] flex h-[28px] items-center pl-[4px] text-[#8c8c8c]">
        <span data-w="33">View</span>
        <div class="ml-[7px] flex h-[25px] w-[86px] items-center rounded-[3px] border border-[#8f8f8f] bg-linear-to-b from-[#f6f6f6] to-[#e6e6e6] pl-[4px]"><span data-w="30">Tree</span><span class="grow"></span><span class="flex h-full w-[16px] items-center justify-center border-l border-[#8f8f8f]"><svg class="h-1 w-2 fill-[#777]" viewBox="0 0 8 4"><path d="M0 0h8L4 4z"/></svg></span></div>
        <div class="ml-[296px] flex h-[28px] w-[52px] items-center justify-center rounded-[3px] border border-[#8b8b8b] bg-linear-to-b from-white to-[#e8e8e8] text-black"><span data-w="32">Help</span></div>
      </div>
    </section>
  </main>

  <svg class="pointer-events-none absolute inset-0 h-[986px] w-[1920px]" viewBox="0 0 1920 986" fill="none" stroke="#fd0000" stroke-width="3" stroke-linecap="round" stroke-linejoin="round">
    <path d="M229 795L240 794 250 790 262 786 280 782 295 777 310 775 322 773 347 770 373 766 390 764 413 762 440 759 465 752 493 744 522 742 545 738 565 735 580 732 602 726 620 719 642 714 660 711 682 707 710 701 740 695 765 690 791 684 820 677 845 672 870 669 882 665 915 661 935 656 956 653 985 648 1008 643 1015 640 1038 636 1060 629 1104 619 1130 611 1174 602 1205 594 1256 585 1280 578 1315 574 1345 568 1373 561 1400 552 1420 547 1453 538 1475 529 1487 527 1519 517"/>
    <path d="M1495 515H1506L1519 516 1520 525 1514 537 1513 548M552 730L558 730 565 736 565 742 557 746"/>
    <path d="M282 818L290 809 298 802 305 801 310 797 330 787 355 775 372 765 392 754 409 747 425 738 438 730 455 722 471 712 485 706 504 696 525 688 531 688M516 680L528 686 525 688 524 695 520 702 519 707M537 685L549 684 556 681M583 676L590 674 608 670"/>
    <path d="M634 667L636 668 647 671H740L809 670 860 670.500H915L956 670 1001 668H1050L1089 667 1162 669 1175 671 1245 675 1278 677H1320L1334 678 1363 684 1378 688 1393 689 1420 695 1440 698 1453 701 1468 707M1463 694L1472 702 1478 709 1472 712 1471 717"/>
    <path d="M275 839L290 835 310 828 322 825 349 819 380 810 409 802 425 793 445 786 475 777 498 769 513 767M499 764L513 767 506 773 505 778M519 767L525 766M538 761H550L559 759M578 753H590M605 749L630 748 640 743 674 732 696 721 718 712 745 700 776 687 800 677 820 668 845 659 870 648 892 640 915 630 941 619 965 608 989 600 1020 587 1045 576 1062 570 1083 560 1100 553 1125 540 1149 530 1182 513 1208 500 1237 482 1271 462 1285 448 1293 436 1300 430 1311 413 1330 388 1352 363 1372 345 1385 336 1396 330 1408 329 1420 324 1440 319 1475 309M1463 305L1477 309 1478 322"/>
    <path d="M1721 304L1732 305 1743 308 1757 320 1758 330 1755 340 1753 343 1738 350 1721 354 1711 351 1700 347 1691 338 1690 331 1693 324 1703 317 1711 309 1721 306 1721 303"/>
    <path d="M1711 443L1695 449 1683 453 1673 460 1666 467 1666 471 1670 478 1687 485 1705 491 1730 498 1745 501 1758 502 1771 502 1783 497 1803 490 1813 483 1825 481 1832 477 1831 474 1807 467 1780 459 1750 452H1740L1720 453 1707 451 1701 446"/>
    <path d="M1683 728L1685 722 1697 712 1710 706 1733 700 1773 693 1790 688 1807 684 1817 688 1821 697 1822 707 1819 714 1815 716 1808 721 1790 722H1767L1733 724 1720 727 1708 729 1683 728"/>
  </svg>
</div>

<script>
const $ = id => document.getElementById(id);
const txt = (t, w) => `<span data-w="${w}">${t}</span>`;

$('menu').innerHTML = [['Pro<u>j</u>ect',49],['<u>E</u>dit',28],['<u>V</u>iew',34],['<u>L</u>ayer',38],['<u>S</u>ettings',56],['<u>P</u>lugins',51],['Vect<u>o</u>r',44],['<u>R</u>aster',44],['<u>D</u>atabase',64],['<u>W</u>eb',30],['Pro<u>c</u>essing',75],['<u>H</u>elp',32]]
  .map(m => txt(m[0], m[1])).join('');

const grip = '<span class="flex w-[14px] shrink-0 justify-end"><svg class="h-[30px] w-[4px]"><rect width="4" height="30" fill="url(#gv)"/></svg></span>';
const arrow = '<span class="flex w-[18px] shrink-0 justify-center"><svg class="h-[8px] w-[13px]" viewBox="0 0 13 8"><path d="M0 0h13L6.500 8z"/></svg></span>';
const arrowG = '<span class="flex w-[18px] shrink-0 justify-center"><svg class="h-[8px] w-[13px] fill-[#999]" viewBox="0 0 13 8"><path d="M0 0h13L6.500 8z"/></svg></span>';
const icon = n => n === 'hand'
  ? '<span class="flex h-[33px] w-[35px] shrink-0 items-center justify-center rounded-sm border border-[#8b8b8b] bg-[#d9d9d9]"><svg class="h-[24px] w-[24px]"><use href="#i-hand"/></svg></span>'
  : `<span class="flex w-[35px] shrink-0 justify-center"><svg class="h-[24px] w-[24px]"><use href="#i-${n}"/></svg></span>`;
const bar = s => '<svg class="h-[30px] w-[5px] shrink-0"><rect width="4" height="30" fill="url(#gv)"/></svg>' +
  s.split(' ').map(n => n === '|' ? grip : n === 'v' ? arrow : n === 'g' ? arrowG : icon(n)).join('');
$('bar1').innerHTML = bar('new open save saveas comp compm | touch hand pansel zin zout z11 zfull zsel zlay zlast znext booknew book refresh | ident action g select v eps v desel table abacus sigma measure v tip text v | help');
$('bar2').innerHTML = bar('pens pen saveg veeg arcg g movg nodeg trash cut copy paste xyg | abc pie abpin ab2 ab3 ab4 ab5 ab6 | csw | py copy2 pinmap xy');

$('vbar').innerHTML = ['vec','ras','feather','pg*','globe1*','globe2','globe3*','comma','virt','newvec*'].map(n =>
  `<span class="flex h-[34px] items-center pl-[3px]"><svg class="h-[24px] w-[24px]"><use href="#v-${n.replace('*','')}"/></svg>${n.endsWith('*') ? '<svg class="ml-[7px] h-[7px] w-[13px]" viewBox="0 0 13 7"><path d="M0 0h13L6.500 7z"/></svg>' : ''}</span>`).join('');

// Branch cell of a tree: t = box sign, 'l' leaf, 'v' line only, ' ' empty; a/b = line above/below
function cell(t, h, a, b) {
  const c = Math.floor(h / 2) + .5;
  let s = '';
  if (t !== ' ') {
    if (t === 'v') s += `<path d="M10.500 0V${h}"/>`;
    else {
      if (a) s += `<path d="M10.500 0V${c}"/>`;
      if (b) s += `<path d="M10.500 ${c}V${h}"/>`;
      s += `<path d="M11 ${c}H20"/>`;
    }
  }
  let box = '';
  if (t === '+' || t === '-') box = `<rect x="5.500" y="${c - 4}" width="8" height="8" fill="#fff" stroke="#888"/><path d="M7.500 ${c}h4${t === '+' ? `M9.500 ${c - 2}v4` : ''}" stroke="#444"/>`;
  return `<svg class="w-[20px] shrink-0" height="${h}"><g stroke="#999" stroke-dasharray="1 1">${s}</g>${box}</svg>`;
}

const T = [['+',0,'folder','Project home',94],['+',0,'folder','Home',42],['l',0,'star','Favourites',70],['+',0,'folder','C:/',22],['-',0,'folder','D:/',22],
 ['+',1,'folder','data',30],['+',1,'folder','kits',23],['+',1,'folder','mydocument',92],['+',1,'folder','SVNsingle',70],['+',1,'folder','test_temp',69],['+',1,'folder','tools',34],['+',1,'folder','VM',21],
 ['l',0,'db2','DB2',28],['l',0,'ms','MSSQL',49],['l',0,'ora','Oracle',44],['-',0,'pg','PostGIS',55],
 ['+',1,'conn','AutoNavi',63],['+',1,'conn','CN (NAV2)',77],['+',1,'conn','CN(GEN2)_RDF_shang',160],['+',1,'conn','mifg_road_localhost',144],['+',1,'conn','NAVDB_NT_CN_ADDC',150]];
$('tree').innerHTML = T.map(([t, lv, ic, s, w], i) => {
  const big = !['folder','conn'].includes(ic), h = big ? 24 : 19;
  const last = lv && T[i + 1] && !T[i + 1][1];
  return `<div class="flex items-center" style="height:${h}px">${lv ? cell(i > 15 ? ' ' : 'v', h) : ''}${cell(t, h, i > 0, !last && !(i === 15))}` +
    (big ? `<svg class="ml-[3px] mr-[6px] h-[24px] w-[24px] shrink-0"><use href="#t-${ic}"/></svg>` : `<svg class="ml-[5px] mr-[7px] h-[16px] w-[13px] shrink-0"><use href="#t-${ic}"/></svg>`) +
    txt(s, w) + '</div>';
}).join('');

const L = [[0,'#3be860',1.5,"'7509684'+'7515...",150],[1,'#a32340',3,"'19288377'+ '758...",155],[1,'#74b074',5,'missing_mifg_list',142],[0,'#5c9a35',1.5,"'96578905',+'965...",155],[0,'#7fa892',1.5,'unidb_ways',96],[1,'#f5172b',3,'1385084113_ma...',150],[1,'#1432e8',3,'1389296001_ma...',150],[1,'#ffff2e',5,'14871629_specifi...',156],[0,'#7b8055',5,'repeat_mifg',99],[1,'#dabdfb',1.5,'r',7]];
$('layers').innerHTML = L.map(([on, c, sw, s, w], i) =>
  `<div class="flex h-[19px] items-center ${i === 6 ? 'bg-[#0a78d7] text-white' : ''}">${cell('l', 19, true, i < 9)}<svg class="ml-[3px] h-[19px] w-[18px] shrink-0"><rect x=".5" y=".5" width="17" height="18" fill="#fafafa" stroke="#bbb"/>${on ? '<path d="M3.500 4l11 11.500M14.500 4L3.500 15.500" stroke="#000" stroke-width="2.600"/>' : ''}</svg>` +
  `<svg class="ml-[7px] h-[19px] w-[18px] shrink-0"><path d="M0 9.500H18" stroke="${c}" stroke-width="${sw}"/></svg><span class="ml-[3px] h-[19px] shrink-0 pl-[3px] ${i === 6 ? 'w-[166px] outline-1 -outline-offset-1 outline-dotted outline-[#f0913c]' : ''}"><span data-w="${w}">${s}</span></span></div>`).join('');

const sub = (nodes) => [['+',2,'(Derived)',65],['+',2,'(Actions)',63],['l',2,'_uid_',40,'1',8]].concat(nodes);
const full = (id, nd) => sub([['l',2,'id',12,id,116],['l',2,'version',50,'1',8],['l',2,'user_id',51,'1',8],['l',2,'tstamp',47,'1970-01-02T00:00:00',159],['l',2,'changeset_id',92,'1',8],['l',2,'tags',28,'"fc"=&gt;"1", "rt"=&gt;"6", "sc"=&gt;...',219],['l',2,'nodes',41,nd,214],['e',2,'bbox',34]]);
const R = [['-',0,'14871629_specified_mifg_id',204],['-',1,'_uid_',40,'1',8], ...sub([['e',2,'id',12,'14871629',71]]), ['+',0,'r',6],
  ['-',0,'1385084113_map_the_same...',219],['-',1,'_uid_',40,'1',8], ...full('1385084113100','{1419645728102,13850841...'),
  ['-',0,'1389296001_map_the_same...',219],['-',1,'_uid_',40,'1',8], ...full('1389296001100','{1419963192102,13892960...')];
$('ident').innerHTML = R.map(([t, lv, s, w, v, vw], i) => {
  let c = '';
  if (lv > 0) c += cell(i < 20 ? 'v' : ' ', 19);
  if (lv > 1) c += cell(' ', 19);
  c += lv === 0 ? cell(t, 19, true, i < 20) : lv === 1 ? cell(t, 19, true, false) : cell(t === 'e' ? 'l' : t, 19, true, t !== 'e');
  return `<div class="flex h-[19px] items-center ${i % 2 ? 'bg-[#f5f5f5]' : ''}"><div class="flex w-[255px] shrink-0 items-center">${c}<span class="w-[3px] shrink-0"></span>${txt(s, w)}</div>${v ? txt(v, vw) : ''}</div>`;
}).join('');

// Tracks every label to its set width; runs again once styles and fonts are in force
function fit() {
  document.querySelectorAll('[data-w]').forEach(e => {
    e.style.display = 'inline-block';
    e.style.whiteSpace = 'pre';
    e.style.flexShrink = 0;
    e.style.letterSpacing = '0px';
    const n = e.textContent.length, w = +e.dataset.w;
    if (n > 1) e.style.letterSpacing = ((w - e.getBoundingClientRect().width) / n).toFixed(3) + 'px';
  });
}
fit();
addEventListener('load', () => { fit(); requestAnimationFrame(fit); });
document.fonts.ready.then(fit);
</script>
</body>
</html>
